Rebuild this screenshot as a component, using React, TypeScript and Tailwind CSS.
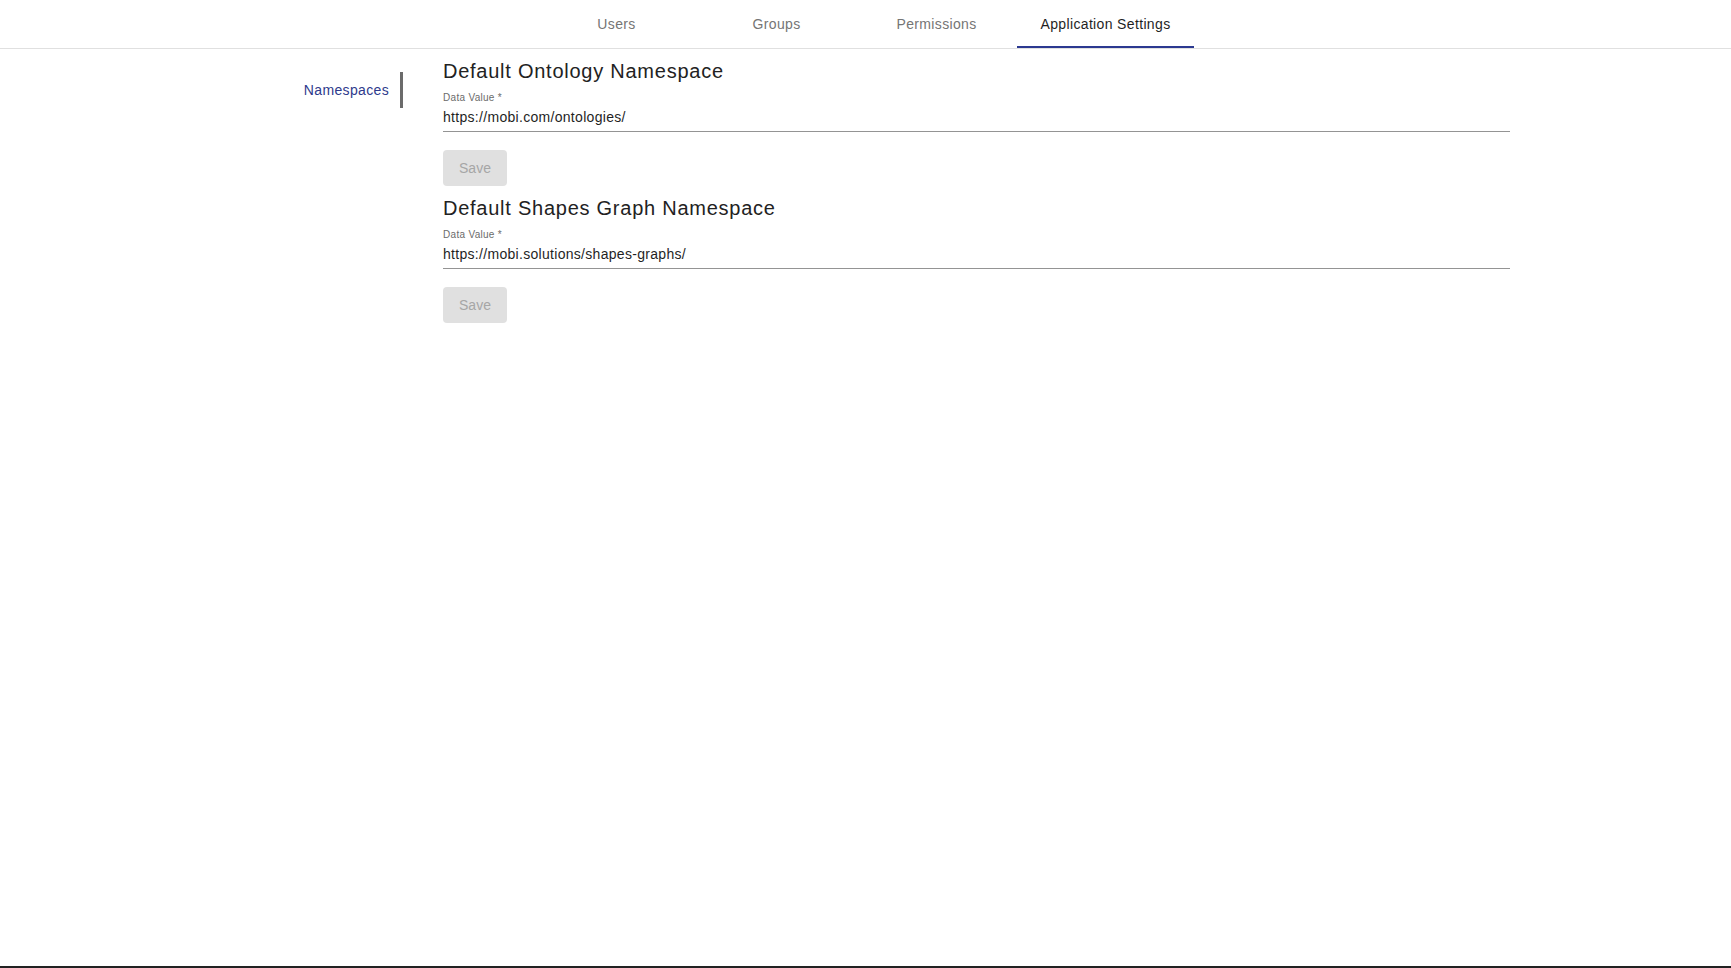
import { useState } from 'react'

const tabs = ['Users', 'Groups', 'Permissions', 'Application Settings']

const settings = [
  { title: 'Default Ontology Namespace', value: 'https://mobi.com/ontologies/' },
  { title: 'Default Shapes Graph Namespace', value: 'https://mobi.solutions/shapes-graphs/' },
]

export default function App() {
  const [active, setActive] = useState(3)

  return (
    <div className="flex h-screen flex-col border-b-2 border-[#222] bg-white font-['Liberation_Sans',Arial,sans-serif] text-[#212121]">
      <div className="flex justify-center border-b border-[#e0e0e0]">
        {tabs.map((tab, i) => (
          <button
            key={tab}
            onClick={() => setActive(i)}
            className={`relative flex h-[48px] min-w-[160px] items-center justify-center px-6 text-[14px] tracking-[0.35px] ${
              i === active ? 'text-[#1f1f1f]' : 'text-[#757575]'
            }`}
          >
            {tab}
            {i === active && <span className="absolute bottom-0 left-0 h-[2px] w-full bg-[#2b3990]" />}
          </button>
        ))}
      </div>

      <div className="flex flex-1">
        <div className="w-[403px] shrink-0 pt-[23px]">
          <div className="flex h-[36px] items-center justify-end border-r-[3px] border-[#6b6b6b] pr-[11px]">
            <span className="text-[14px] tracking-[0.35px] text-[#2e3a8c]">Namespaces</span>
          </div>
        </div>

        <div className="ml-[40px] w-[1067px] pt-[10px]">
          {settings.map((s) => (
            <SettingBlock key={s.title} title={s.title} value={s.value} />
          ))}
        </div>
      </div>
    </div>
  )
}

function SettingBlock({ title, value }: { title: string; value: string }) {
  const [text, setText] = useState(value)

  return (
    <div className="pb-[10px]">
      <h2 className="text-[20px] leading-[24px] tracking-[0.75px] text-[#222]">{title}</h2>
      <label className="mt-[7px] block text-[10px] leading-[16px] tracking-[0.3px] text-[#6b6b6b]">Data Value *</label>
      <input
        value={text}
        onChange={(e) => setText(e.target.value)}
        className="block h-[26px] w-full border-b border-[#949494] pb-[4px] text-[14px] leading-[20px] tracking-[0.3px] text-[#1f1f1f] outline-none"
      />
      <button
        disabled
        className="mt-[18px] h-[36px] w-[64px] rounded-[4px] bg-[#e0e0e0] text-[14px] font-medium text-[#a6a6a6]"
      >
        Save
      </button>
    </div>
  )
}
